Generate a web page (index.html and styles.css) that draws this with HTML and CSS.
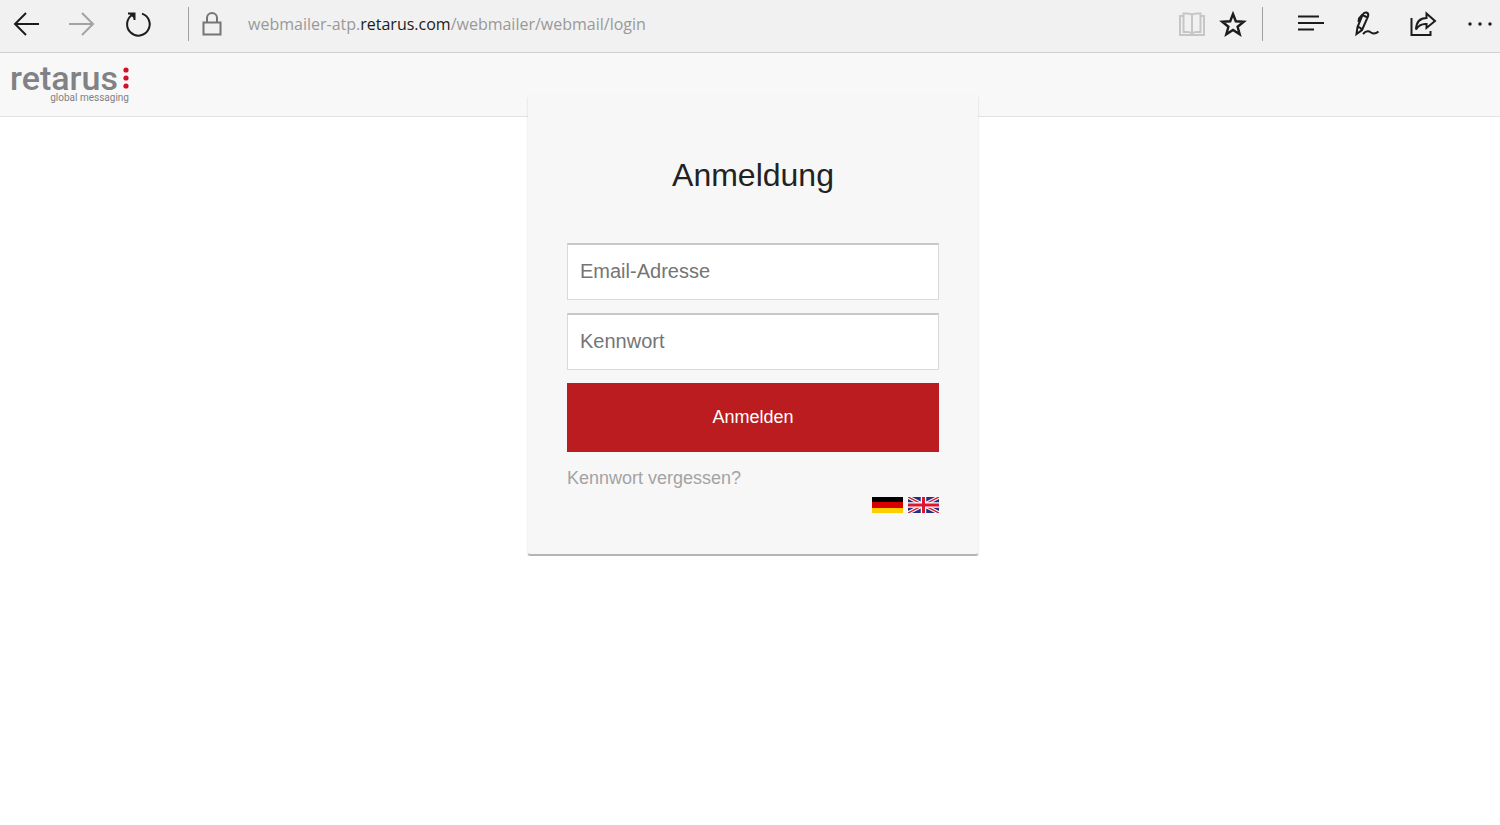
FILE: index.html
```html
<!DOCTYPE html>
<html lang="de">
<head>
<meta charset="utf-8">
<title>Anmeldung</title>
<link rel="stylesheet" href="styles.css">
</head>
<body>
<nav class="toolbar" aria-label="Browser">
  <div class="nav-buttons">
    <button class="tool" aria-label="Zurück"><svg viewBox="0 0 28 28"><path d="M27 14H3M14 3L3 14l11 11"/></svg></button>
    <button class="tool dim" aria-label="Vorwärts"><svg viewBox="0 0 28 28"><path d="M1 14h24M14 3l11 11-11 11"/></svg></button>
    <button class="tool" aria-label="Aktualisieren"><svg viewBox="0 0 28 28"><path d="M18 3.600A11.300 11.300 0 1 1 8 5"/><path d="M4 3.500h6.500V10"/><path class="solid" d="M4.500 3h6.500v6.500z"/></svg></button>
  </div>
  <span class="divider"></span>
  <svg class="lock" viewBox="0 0 20 28"><path d="M1.500 12.500h17v12h-17zM5 12.500V8a5 5 0 0 1 10 0v4.500"/></svg>
  <div class="address">webmailer-atp.<span class="domain">retarus.com</span>/webmailer/webmail/login</div>
  <div class="page-buttons">
    <button class="tool faint" aria-label="Leseansicht"><svg viewBox="0 0 28 28"><path d="M14 4.500Q12 3.500 9 3.500H5.500V22H10q3 0 4 2 1-2 4-2h4.500V3.500H19q-3 0-5 1zM14 4.500V24M5.500 6H2v19h24V6h-3.500"/></svg></button>
    <button class="tool" aria-label="Favorit"><svg viewBox="0 0 28 28"><path class="bold" d="M14 4l2.800 7.300 7.900.400-6.100 5 2.100 7.600-6.700-4.300-6.700 4.300 2.100-7.600-6.100-5 7.900-.400z"/></svg></button>
  </div>
  <span class="divider"></span>
  <div class="menu-buttons">
    <button class="tool" aria-label="Hub"><svg viewBox="0 0 28 28"><path d="M0 6.500h21M0 13h26M0 19.500h16"/></svg></button>
    <button class="tool" aria-label="Webseitennotiz"><svg viewBox="0 0 28 28"><path d="M2.500 24L3.500 17 8.500 5Q10 2 12.500 2.500 15 3.500 14 6.500L8 20zM3.500 17q3 0 4.500 3M8.500 4.500L5 8.500 4.500 12M8.500 5l5 2.500M9 24q4-4.500 8-1.500 3.500 2.500 7.500-1"/></svg></button>
    <button class="tool" aria-label="Teilen"><svg viewBox="0 0 28 28"><path d="M1.500 8v17h19v-4"/><path d="M6 19.500Q6.500 8 16.500 8V3.500l8.500 7.500-8.500 7v-4q-7-.5-10.500 5.500z"/></svg></button>
    <button class="tool" aria-label="Mehr"><svg viewBox="0 0 28 28"><circle class="solid" cx="4" cy="14" r="1.700"/><circle class="solid" cx="14" cy="14" r="1.700"/><circle class="solid" cx="24" cy="14" r="1.700"/></svg></button>
  </div>
</nav>
<header class="site-header">
  <div class="logo">
    <div class="brand">retarus<svg class="dots" viewBox="0 0 6 22"><circle cx="3" cy="3" r="2.600"/><circle cx="3" cy="11" r="2.600"/><circle cx="3" cy="19" r="2.600"/></svg></div>
    <div class="tagline">global messaging</div>
  </div>
</header>
<main class="content">
  <form class="card">
    <h1 class="title">Anmeldung</h1>
    <input class="field" type="email" aria-label="Email-Adresse" placeholder="Email-Adresse">
    <input class="field" type="password" aria-label="Kennwort" placeholder="Kennwort">
    <button class="submit" type="button">Anmelden</button>
    <a class="forgot" href="#">Kennwort vergessen?</a>
    <div class="languages">
      <a class="flag" href="#" aria-label="Deutsch"><svg viewBox="0 0 31 16"><path fill="#000" d="M0 0h31v6H0z"/><path fill="#d80000" d="M0 5h31v6H0z"/><path fill="#ffce00" d="M0 11h31v5H0z"/></svg></a>
      <a class="flag" href="#" aria-label="English"><svg viewBox="0 0 31 16"><path fill="#22307f" d="M0 0h31v16H0z"/><path stroke="#fff" stroke-width="3.600" d="M0 0l31 16M31 0L0 16"/><path stroke="#dc2038" stroke-width="1.500" d="M0 0l31 16M31 0L0 16"/><path stroke="#fff" stroke-width="5.500" d="M15.500 0v16M0 8h31"/><path stroke="#dc1530" stroke-width="3" d="M15.500 0v16M0 8h31"/></svg></a>
    </div>
  </form>
</main>
</body>
</html>
```
FILE: styles.css
```css
* { box-sizing: border-box; }
body {
  margin: 0;
  background: #fff;
  font-family: "Liberation Sans", Arial, sans-serif;
}
.toolbar {
  display: flex;
  align-items: center;
  height: 53px;
  padding: 0 6px 5px 12px;
  background: #f1f1f1;
  border-bottom: 1px solid #d0d0d0;
}
.nav-buttons, .menu-buttons { display: flex; gap: 28px; }
.page-buttons { display: flex; gap: 13px; margin-left: auto; }
.tool {
  width: 28px;
  height: 28px;
  padding: 0;
  border: 0;
  background: none;
  color: #1c1c1c;
}
.tool svg { display: block; width: 28px; height: 28px; }
.tool path, .lock path { fill: none; stroke: currentColor; stroke-width: 2; }
.tool .bold { stroke-width: 2.4; }
.tool .solid { fill: currentColor; stroke: none; }
.tool.dim { color: #a3a3a3; }
.tool.faint { color: #c6c6c6; }
.divider { width: 1px; height: 34px; background: #a0a0a0; }
.nav-buttons + .divider { margin-left: 36px; }
.page-buttons + .divider { margin: 0 35px 0 15px; }
.lock { width: 20px; height: 28px; margin: 0 26px 0 13px; color: #757575; }
.address {
  color: #999;
  font: 16px/24px "Open Sans", "Noto Sans", sans-serif;
}
.domain { color: #1c1c1c; }
.site-header {
  height: 64px;
  padding: 10px;
  background: #f8f8f8;
  border-bottom: 1px solid #e2e2e2;
}
.logo {
  width: max-content;
  color: #808285;
  font-family: Roboto, sans-serif;
}
.brand {
  display: flex;
  align-items: center;
  gap: 5px;
  font-size: 34px;
  font-weight: 500;
  line-height: 30px;
}
.dots { width: 6px; height: 22px; fill: #d0112b; }
.tagline { font-size: 10px; line-height: 10px; text-align: right; }
.content {
  display: flex;
  justify-content: center;
  padding-left: 6px;
  margin-top: -23px;
}
.card {
  display: flex;
  flex-direction: column;
  width: 450px;
  max-width: 100%;
  padding: 62px 39px 41px;
  background: #f7f7f7;
  border-bottom: 2px solid #b5b5b5;
  border-radius: 3px;
  box-shadow: 0 2px 2px rgba(0, 0, 0, 0.2);
}
.title {
  margin: 0 0 49px;
  color: #222;
  font-size: 32px;
  font-weight: 400;
  line-height: 38px;
  text-align: center;
}
.field {
  width: 100%;
  height: 57px;
  margin: 0 0 13px;
  padding: 0 12px 2px;
  border: 1px solid #d9d9d9;
  border-top: 2px solid #c8c8c8;
  background: #fff;
  color: #222;
  font: 20px "Liberation Sans", Arial, sans-serif;
}
.field::placeholder { color: #757575; opacity: 1; }
.submit {
  height: 69px;
  border: 0;
  background: #bb1c20;
  color: #fff;
  font: 18px "Liberation Sans", Arial, sans-serif;
}
.forgot {
  align-self: flex-start;
  margin-top: 14px;
  color: #a3a3a3;
  font-size: 18px;
  line-height: 24px;
  text-decoration: none;
}
.languages { display: flex; justify-content: flex-end; gap: 5px; margin-top: 7px; }
.flag, .flag svg { display: block; width: 31px; height: 16px; }
```
